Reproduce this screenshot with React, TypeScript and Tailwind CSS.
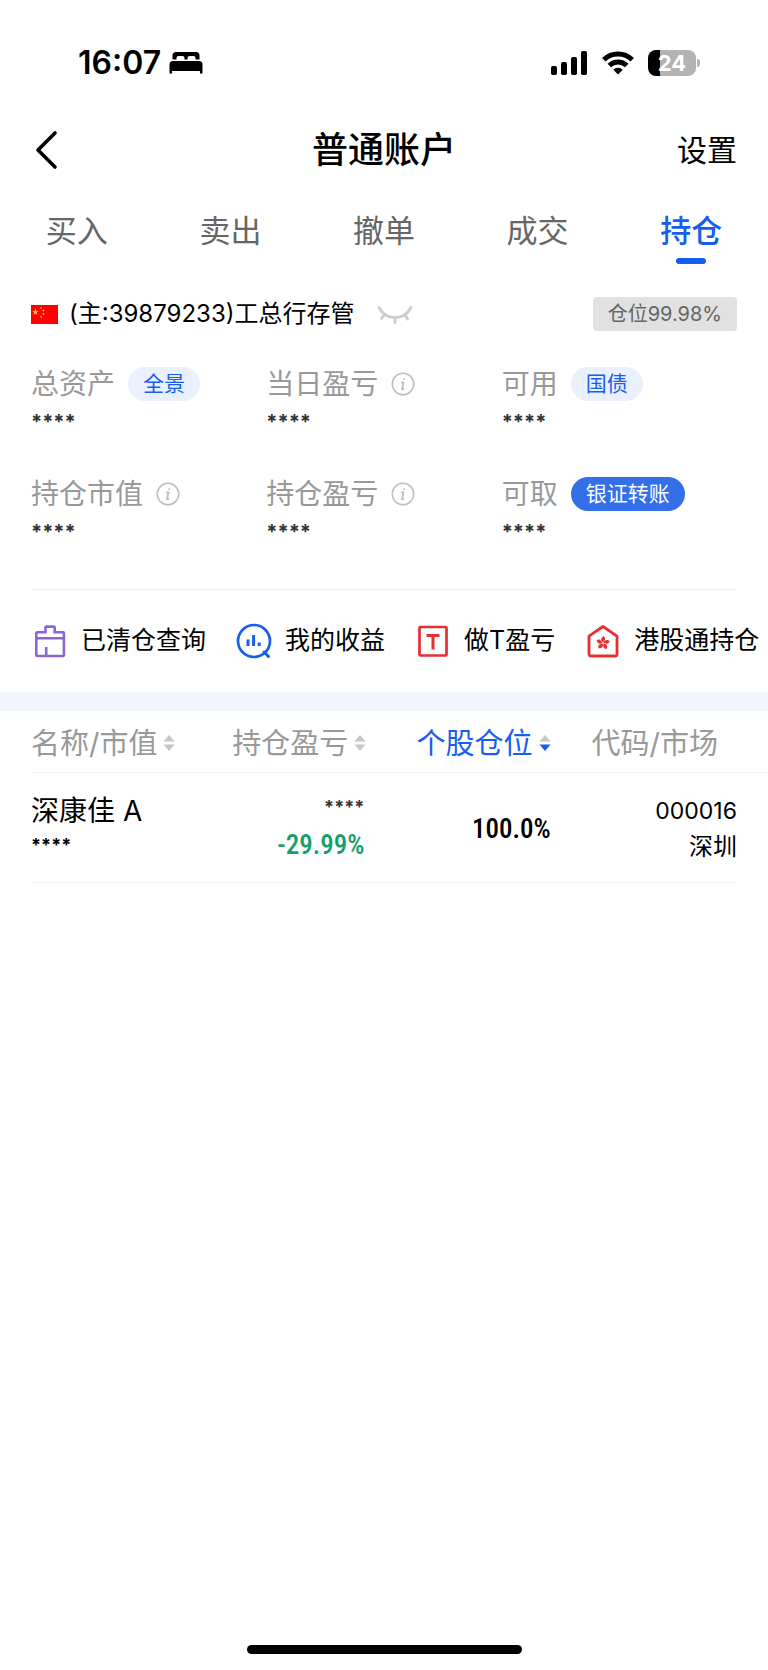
import type { ReactNode } from 'react';

const tabs = ['买入', '卖出', '撤单', '成交', '持仓'];

type Stat = { label: string; info?: boolean; action?: string; solid?: boolean };

const stats: Stat[] = [
	{ label: '总资产', action: '全景' },
	{ label: '当日盈亏', info: true },
	{ label: '可用', action: '国债' },
	{ label: '持仓市值', info: true },
	{ label: '持仓盈亏', info: true },
	{ label: '可取', action: '银证转账', solid: true },
];

const shortcuts = [
	{ name: '已清仓查询', icon: ClearedIcon },
	{ name: '我的收益', icon: ProfitIcon },
	{ name: '做T盈亏', icon: TradeIcon },
	{ name: '港股通持仓', icon: HkIcon },
];

function ClearedIcon() {
	return (
		<svg viewBox="0 0 36 36" className="size-9" fill="none" stroke="#8b64d8" strokeWidth="2.6" aria-hidden="true">
			<path d="M4.3 32V10.2a1 1 0 0 1 1-1h8.2V4.6a1 1 0 0 1 1-1h7.2a1 1 0 0 1 1 1v4.6h8.2a1 1 0 0 1 1 1V32a1 1 0 0 1-1 1H5.3a1 1 0 0 1-1-1Z" />
			<path d="M4 15.2h28M14.2 33v-9" />
		</svg>
	);
}

function ProfitIcon() {
	return (
		<svg viewBox="0 0 36 36" className="size-9" fill="none" stroke="#155eee" strokeWidth="2.7" aria-hidden="true">
			<circle cx="18" cy="18" r="16" />
			<path d="m28 29 4.5 4.5" strokeWidth="3" strokeLinecap="round" />
			<path d="M12 16.5v6.5M17.6 12v11M23.2 19.5v3.5" strokeWidth="3" />
		</svg>
	);
}

function TradeIcon() {
	return (
		<svg viewBox="0 0 36 36" className="size-9" fill="none" stroke="#e62e33" strokeWidth="2.7" aria-hidden="true">
			<rect x="4.5" y="4" width="27" height="28.5" rx="1" />
			<path d="M11.5 12.5h13M18 12.5v14" strokeWidth="3" />
		</svg>
	);
}

function HkIcon() {
	return (
		<svg viewBox="0 0 36 36" className="size-9" fill="none" stroke="#e62e33" strokeWidth="2.8" strokeLinejoin="round" aria-hidden="true">
			<path d="M4 13.2 18 3.5l14 9.7V31a2 2 0 0 1-2 2H6a2 2 0 0 1-2-2Z" />
			{[0, 72, 144, 216, 288].map((deg) => (
				<path
					key={deg}
					d="M18 19.5c-2.5-1.5-2.5-5 .8-6.5.2 1.2 1.8 1.8 1.2 3.6-.4 1.2-1.5 1.5-2 2.9Z"
					transform={`rotate(${deg} 18 20)`}
					fill="#e62e33"
					stroke="none"
				/>
			))}
		</svg>
	);
}

function InfoIcon() {
	return (
		<svg viewBox="0 0 24 24" className="size-6" fill="none" stroke="#c0c0c0" strokeWidth="1.6" aria-hidden="true">
			<circle cx="12" cy="12" r="10.7" />
			<path d="M10 10.3h2.5L11 17h2.2" strokeWidth="1.8" />
			<path d="M12.5 6.2H14l-.4 1.9h-1.5Z" fill="#c0c0c0" stroke="none" />
		</svg>
	);
}

function StatusBar() {
	return (
		<div className="flex h-[126px] items-center justify-between pr-[68px] pl-[78px]">
			<div className="flex items-center gap-2">
				<span className="text-[32px] font-semibold">16:07</span>
				<svg viewBox="0 0 34 24" className="h-6 w-[34px]" aria-hidden="true">
					<path d="M3.5 8.5v-4A3.5 3.5 0 0 1 7 1h20a3.5 3.5 0 0 1 3.5 3.5v4h-4V7a2 2 0 0 0-2-2h-4a2 2 0 0 0-2 2v1.5h-3V7a2 2 0 0 0-2-2h-4a2 2 0 0 0-2 2v1.5Z" />
					<path d="M.5 13.5A3.5 3.5 0 0 1 4 10h26a3.5 3.5 0 0 1 3.5 3.5v8a1.3 1.3 0 0 1-2.6 0V20H3.1v1.5a1.3 1.3 0 0 1-2.6 0Z" />
				</svg>
			</div>
			<div className="flex items-center gap-[14px]">
				<svg viewBox="0 0 38 24" className="h-6 w-[38px]" aria-hidden="true">
					<rect x="1" y="15" width="6" height="9" rx="1.8" />
					<rect x="11" y="11" width="6" height="13" rx="1.8" />
					<rect x="21" y="6" width="6" height="18" rx="1.8" />
					<rect x="31" y="0" width="6" height="24" rx="1.8" />
				</svg>
				<svg viewBox="0 0 32 24" className="h-6 w-8" fill="none" stroke="#000" strokeWidth="5" aria-hidden="true">
					<path d="M1.8 8.7a20.4 20.4 0 0 1 28.4 0" />
					<path d="M7.3 14.5a12.4 12.4 0 0 1 17.4 0" />
					<path d="M16 23.5l-4.7-4.8a6.8 6.8 0 0 1 9.4 0Z" fill="#000" stroke="none" />
				</svg>
				<div className="flex items-center gap-px">
					<div className="flex h-[26px] w-12 items-center justify-center rounded-lg bg-linear-to-r from-black from-25% to-[#b3b3b3] to-25% text-[22px] font-bold text-white">
						24
					</div>
					<div className="h-2 w-[3px] rounded-r-full bg-[#b3b3b3]" />
				</div>
			</div>
		</div>
	);
}

function SortArrows({ active }: { active?: boolean }) {
	return (
		<svg viewBox="0 0 12 16" className="h-4 w-3" fill="#c6c6c6" aria-hidden="true">
			<path d="M6 0l5.5 6.5H.5Z" />
			<path d="M6 16l5.5-6.5H.5Z" fill={active ? '#155eee' : undefined} />
		</svg>
	);
}

function SortButton({ active, children }: { active?: boolean; children: ReactNode }) {
	return (
		<button className={active ? 'inline-flex items-center gap-[6px] text-[#155eee]' : 'inline-flex items-center gap-[6px]'}>
			{children}
			<SortArrows active={active} />
		</button>
	);
}

export default function App() {
	return (
		<div className="flex min-h-screen flex-col bg-white font-[Inter,'Noto_Sans_CJK_SC',sans-serif] text-black">
			<StatusBar />

			<header className="grid h-12 grid-cols-3 items-center px-[31px]">
				<button aria-label="返回" className="justify-self-start">
					<svg viewBox="0 0 30 40" className="h-10 w-[30px]" fill="none" stroke="#000" strokeWidth="3.6" strokeLinecap="round" strokeLinejoin="round" aria-hidden="true">
						<path d="M24 3 7 20l17 17" />
					</svg>
				</button>
				<h1 className="text-center text-[36px] leading-[48px] font-medium">普通账户</h1>
				<button className="justify-self-end text-[30px]">设置</button>
			</header>

			<nav className="mt-[34px] grid grid-cols-5">
				{tabs.map((tab) => (
					<a
						key={tab}
						href="#"
						className={
							tab === '持仓'
								? 'flex flex-col items-center gap-1 text-[31px] leading-[46px] font-medium text-[#155eee]'
								: 'flex flex-col items-center gap-1 text-[31px] leading-[46px] text-[#666]'
						}
					>
						{tab}
						{tab === '持仓' && <span className="h-[6px] w-[30px] rounded-full bg-[#155eee]" />}
					</a>
				))}
			</nav>

			<section className="mt-[33px] flex items-center px-[31px]">
				<svg viewBox="0 0 27 19" className="h-[19px] w-[27px]" aria-hidden="true">
					<path fill="#fe0000" d="M0 0h27v19H0z" />
					<path fill="#ffe000" d="m4.4 3.6.8 2.3h2.4L5.7 7.4l.7 2.4-2-1.4-2 1.4.7-2.4-1.9-1.5h2.4Z" />
					<g fill="#ffd000">
						<circle cx="10" cy="3" r=".9" />
						<circle cx="12.5" cy="5.5" r=".9" />
						<circle cx="12.5" cy="9" r=".9" />
						<circle cx="10" cy="11.7" r=".9" />
					</g>
				</svg>
				<p className="ml-[11px] text-2xl leading-[34px]">(主:39879233)工总行存管</p>
				<button aria-label="显示金额" className="ml-[22px]">
					<svg viewBox="0 0 36 20" className="h-5 w-9" fill="none" stroke="#ccc" strokeWidth="2.8" strokeLinecap="round" aria-hidden="true">
						<path d="M2 3.5c7 13.500 25 13.500 32 0M7.500 10.500l-3 4M18 14v4.500M28 11l2.500 4" />
					</svg>
				</button>
				<span className="ml-auto rounded-sm bg-[#e1e1e1] px-[15px] text-xl leading-[34px] text-[#666]">
					仓位99.98%
				</span>
			</section>

			<dl className="mx-[31px] mt-[35px] grid grid-cols-3 gap-y-12 border-b border-[#efefef] pb-[51px]">
				{stats.map((stat) => (
					<div key={stat.label}>
						<dt className="flex h-9 items-center gap-[13px] text-[28px] text-[#999]">
							{stat.label}
							{stat.info && <InfoIcon />}
							{stat.action && (
								<button
									className={
										stat.solid
											? 'rounded-full bg-[#326fe8] px-[15px] text-[21px] leading-[34px] text-white'
											: 'rounded-full bg-[#eaf0fe] px-[15px] text-[21px] leading-[34px] text-[#155eee]'
									}
								>
									{stat.action}
								</button>
							)}
						</dt>
						<dd className="h-[26px] text-xl leading-10 font-bold text-[#333]">****</dd>
					</div>
				))}
			</dl>

			<nav className="flex h-[102px] items-center gap-[30px] pl-8">
				{shortcuts.map((item) => (
					<a key={item.name} href="#" className="flex shrink-0 items-center gap-[13px] text-[25px]">
						<item.icon />
						{item.name}
					</a>
				))}
			</nav>

			<div className="h-[19px] bg-[#f2f5fd]" />

			<div className="pl-[31px]">
				<table className="w-full table-fixed">
					<thead>
						<tr className="h-[61px] border-b border-[#f3f3f3] text-[29px] text-[#999]">
							<th className="w-[21.5%] pt-1 text-left font-normal whitespace-nowrap">
								<SortButton>名称/市值</SortButton>
							</th>
							<th className="w-[24%] pt-1 text-right font-normal">
								<SortButton>持仓盈亏</SortButton>
							</th>
							<th className="w-[25%] pt-1 text-right font-normal">
								<SortButton active>个股仓位</SortButton>
							</th>
							<th className="pt-1 pr-[50px] text-right font-normal">代码/市场</th>
						</tr>
					</thead>
					<tbody>
						<tr className="h-[110px]">
							<td>
								<div className="text-[28px] leading-9 whitespace-nowrap">深康佳 A</div>
								<div className="text-lg leading-8 font-bold">****</div>
							</td>
							<td className="pr-0.5 text-right">
								<div className="text-lg leading-9 font-bold text-[#333]">****</div>
								<div className="font-['Roboto_Condensed',Roboto,sans-serif] text-[27px] leading-10 font-medium text-[#12a06b]">
									-29.99%
								</div>
							</td>
							<td className="pt-1 text-right font-['Roboto_Condensed',Roboto,sans-serif] text-[27px] font-medium">
								100.0%
							</td>
							<td className="pt-1 pr-[31px] text-right">
								<div className="text-[23px] leading-9">000016</div>
								<div className="text-2xl leading-9">深圳</div>
							</td>
						</tr>
					</tbody>
				</table>
			</div>
			<hr className="mx-[31px] border-[#f3f3f3]" />

			<div className="mx-auto mt-auto mb-4 h-[9px] w-[275px] rounded-full bg-black" />
		</div>
	);
}
